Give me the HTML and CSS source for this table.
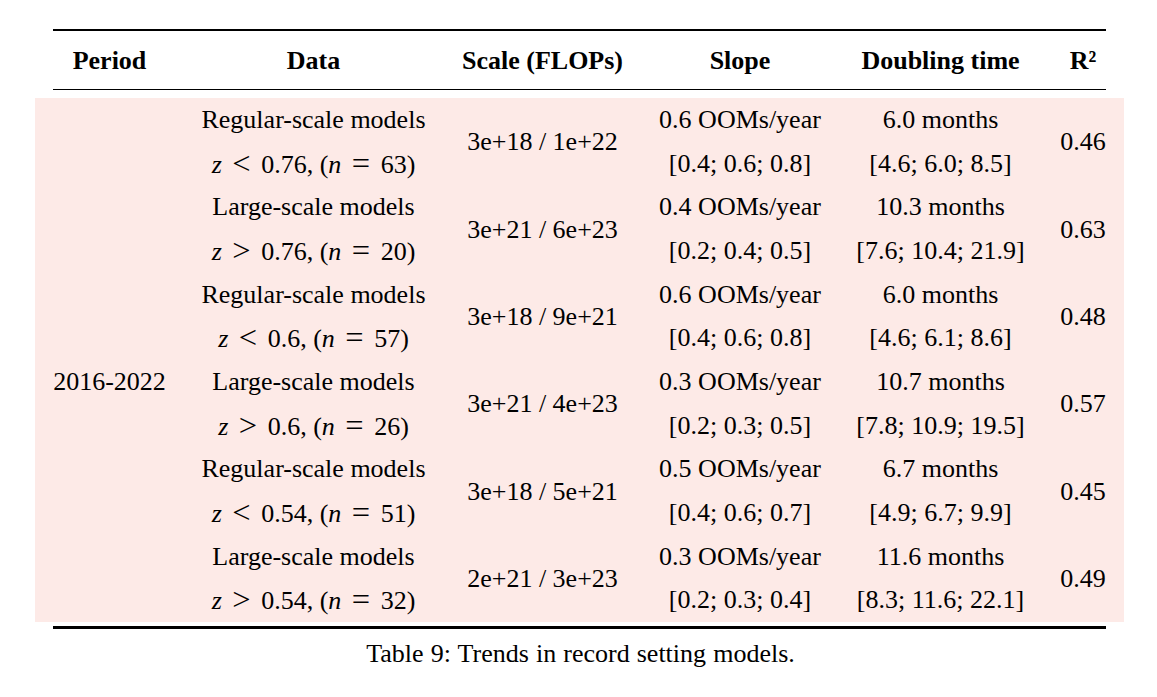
FILE: index.html
```html
<!DOCTYPE html>
<html lang="en">
<head>
<meta charset="utf-8">
<title>Table 9: Trends in record setting models</title>
<link rel="stylesheet" href="styles.css">
</head>
<body>
<div class="page">
  <div class="table">
    <div class="row head">
      <div class="cell c1">Period</div>
      <div class="cell">Data</div>
      <div class="cell">Scale (FLOPs)</div>
      <div class="cell">Slope</div>
      <div class="cell">Doubling time</div>
      <div class="cell c6">R²</div>
    </div>
    <div class="body">
      <div class="row group">
        <div class="cell c1 period"></div>
        <div class="cell two"><div>Regular-scale models</div><div><i>z</i><span class="rel">&lt;</span>0.76, (<i>n</i><span class="rel">=</span>63)</div></div>
        <div class="cell mid">3e+18 / 1e+22</div>
        <div class="cell two"><div>0.6 OOMs/year</div><div>[0.4; 0.6; 0.8]</div></div>
        <div class="cell two"><div>6.0 months</div><div>[4.6; 6.0; 8.5]</div></div>
        <div class="cell c6 mid">0.46</div>
      </div>
      <div class="row group">
        <div class="cell c1 period"></div>
        <div class="cell two"><div>Large-scale models</div><div><i>z</i><span class="rel">&gt;</span>0.76, (<i>n</i><span class="rel">=</span>20)</div></div>
        <div class="cell mid">3e+21 / 6e+23</div>
        <div class="cell two"><div>0.4 OOMs/year</div><div>[0.2; 0.4; 0.5]</div></div>
        <div class="cell two"><div>10.3 months</div><div>[7.6; 10.4; 21.9]</div></div>
        <div class="cell c6 mid">0.63</div>
      </div>
      <div class="row group">
        <div class="cell c1 period"></div>
        <div class="cell two"><div>Regular-scale models</div><div><i>z</i><span class="rel">&lt;</span>0.6, (<i>n</i><span class="rel">=</span>57)</div></div>
        <div class="cell mid">3e+18 / 9e+21</div>
        <div class="cell two"><div>0.6 OOMs/year</div><div>[0.4; 0.6; 0.8]</div></div>
        <div class="cell two"><div>6.0 months</div><div>[4.6; 6.1; 8.6]</div></div>
        <div class="cell c6 mid">0.48</div>
      </div>
      <div class="row group">
        <div class="cell c1 period">2016-2022</div>
        <div class="cell two"><div>Large-scale models</div><div><i>z</i><span class="rel">&gt;</span>0.6, (<i>n</i><span class="rel">=</span>26)</div></div>
        <div class="cell mid">3e+21 / 4e+23</div>
        <div class="cell two"><div>0.3 OOMs/year</div><div>[0.2; 0.3; 0.5]</div></div>
        <div class="cell two"><div>10.7 months</div><div>[7.8; 10.9; 19.5]</div></div>
        <div class="cell c6 mid">0.57</div>
      </div>
      <div class="row group">
        <div class="cell c1 period"></div>
        <div class="cell two"><div>Regular-scale models</div><div><i>z</i><span class="rel">&lt;</span>0.54, (<i>n</i><span class="rel">=</span>51)</div></div>
        <div class="cell mid">3e+18 / 5e+21</div>
        <div class="cell two"><div>0.5 OOMs/year</div><div>[0.4; 0.6; 0.7]</div></div>
        <div class="cell two"><div>6.7 months</div><div>[4.9; 6.7; 9.9]</div></div>
        <div class="cell c6 mid">0.45</div>
      </div>
      <div class="row group">
        <div class="cell c1 period"></div>
        <div class="cell two"><div>Large-scale models</div><div><i>z</i><span class="rel">&gt;</span>0.54, (<i>n</i><span class="rel">=</span>32)</div></div>
        <div class="cell mid">2e+21 / 3e+23</div>
        <div class="cell two"><div>0.3 OOMs/year</div><div>[0.2; 0.3; 0.4]</div></div>
        <div class="cell two"><div>11.6 months</div><div>[8.3; 11.6; 22.1]</div></div>
        <div class="cell c6 mid">0.49</div>
      </div>
    </div>
    <div class="bottom-rule"></div>
  </div>
  <p class="caption">Table 9: Trends in record setting models.</p>
</div>
</body>
</html>
```

FILE: styles.css
```css
html, body {
  margin: 0;
  padding: 0;
  background: #ffffff;
}

body {
  font-family: "Liberation Serif", "Times New Roman", serif;
  font-size: 26px;
  color: #000;
}

.page {
  width: 1157px;
  padding-top: 29px;
}

.table {
  width: 1053px;
  margin-left: 53px;
}

.row {
  display: grid;
  grid-template-columns: 130.5px 260px 198px 197px 204px 63.5px;
}

.cell {
  text-align: center;
  white-space: nowrap;
}

.c1 {
  padding-right: 17.5px;
}

.c6 {
  padding-left: 17.5px;
}

.head {
  border-top: 2px solid #000;
  border-bottom: 1px solid #000;
  height: 58px;
  box-sizing: content-box;
  font-weight: bold;
  line-height: 58px;
}

.head .cell {
  padding-top: 1px;
}

.body {
  margin: 8px -18px 0;
  padding: 0 18px;
  background: #fdeae7;
  line-height: 43.667px;
}

.group {
  height: 87.333px;
}

.mid {
  align-self: center;
}

.period {
  align-self: start;
}

.rel {
  font-size: 1.25em;
  padding: 0 10.5px;
  vertical-align: -1px;
}

i {
  font-style: italic;
}

.bottom-rule {
  margin-top: 4px;
  border-top: 3px solid #000;
}

.caption {
  margin: 10px 0 0;
  width: 1157px;
  padding-left: 4px;
  box-sizing: border-box;
  text-align: center;
  line-height: 30px;
  word-spacing: 0.6px;
}
```
